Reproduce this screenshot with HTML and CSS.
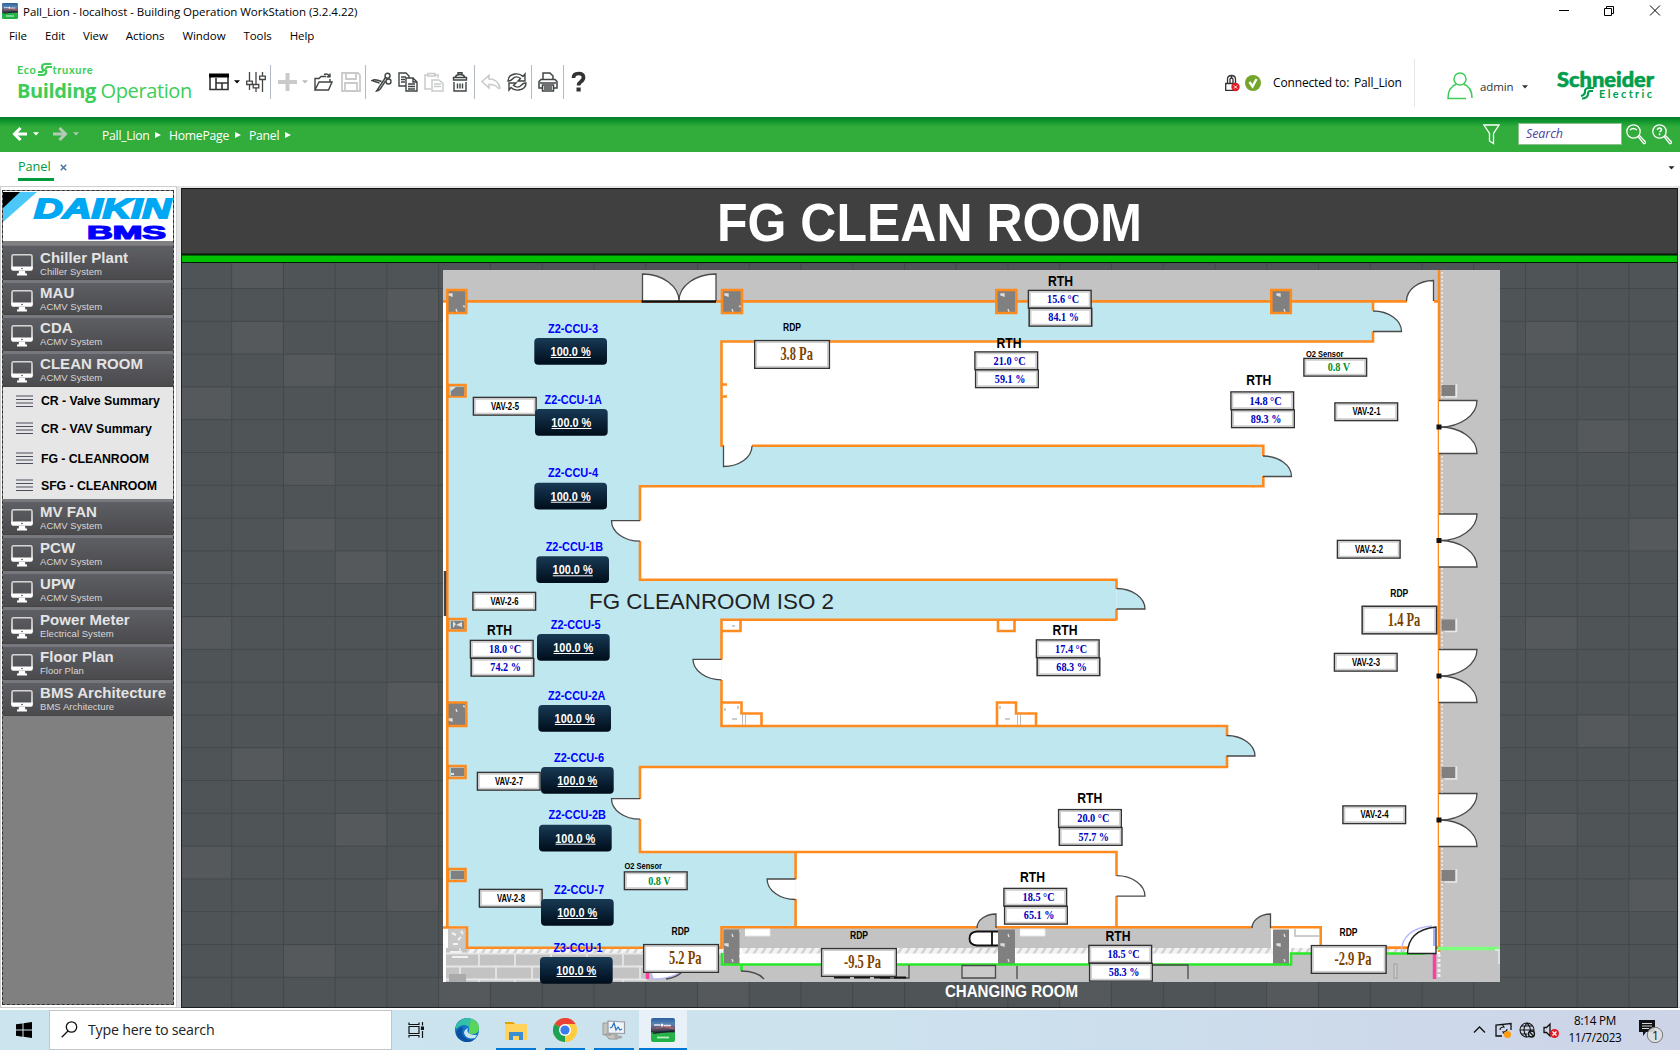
FILE: index.html
```html
<!DOCTYPE html>
<html lang="en">
<head>
<meta charset="utf-8">
<title>Pall_Lion - localhost - Building Operation WorkStation (3.2.4.22)</title>
<link rel="stylesheet" href="styles.css">
</head>
<body>
<svg class="defs" width="0" height="0" aria-hidden="true">
  <defs>
    <linearGradient id="gApp" x1="0" y1="0" x2="0" y2="1"><stop offset="0" stop-color="#2a5f9e"/><stop offset=".25" stop-color="#5b83b4"/><stop offset=".42" stop-color="#6a5a72"/><stop offset=".58" stop-color="#2b3340"/><stop offset=".62" stop-color="#28b34a"/><stop offset="1" stop-color="#1fb243"/></linearGradient>
    <linearGradient id="gScreen" x1="0" y1="0" x2="0" y2="1"><stop offset="0" stop-color="#d6d6d6"/><stop offset="1" stop-color="#fff"/></linearGradient>
    <symbol id="monitor" viewBox="0 0 24 24"><rect x="2" y="1.7" width="20" height="14.5" rx="1.5" fill="none" stroke="url(#gScreen)" stroke-width="1.5"/><path d="M1.3 13.5h21.4v2.5q0 1.7-1.7 1.7H3q-1.7 0-1.7-1.7zM9 18h6l.4 2.5H17v2H7v-2h1.600z" fill="#fff"/><circle cx="12" cy="15.500" r=".8" fill="#444"/></symbol>
    <symbol id="bars" viewBox="0 0 17 13"><path d="M0 1h17M0 4.500h17M0 8h17M0 11.500h17" stroke="#4c4c5c" stroke-width="1.200"/></symbol>
    <symbol id="caret" viewBox="0 0 6 4"><path d="M0 .3h6L3 3.500z" fill="currentColor"/></symbol>
    <symbol id="app" viewBox="0 0 24 24"><rect width="24" height="24" rx="2" fill="url(#gApp)"/><path d="M1 12 14 7l9 3v1.500L13 9z" fill="#b8605c"/><path d="M3 7h6M13 7.500h7" stroke="#dfe9f5" stroke-width="1.300"/><circle cx="11" cy="7" r="1.500" fill="#fff"/><path d="M2 14.500 23 12v1.500L2 16z" fill="#1b2430"/><path d="M6 19.500h12" stroke="#b5efc2" stroke-width="1.800"/></symbol>
  </defs>
</svg>

<header class="titlebar">
  <svg class="appicon" width="16" height="16"><use href="#app"/></svg>
  <span class="caption">Pall_Lion - localhost - Building Operation WorkStation (3.2.4.22)</span>
  <svg class="winctl" width="102" height="12" fill="none" stroke="#000"><path d="M0 5.500h10M45.500 3.500h7v7h-7zM47.500 3.500v-2h7v7h-2M91 .5l10 10M101 .5l-10 10"/></svg>
</header>
<nav class="menubar"><span>File</span><span>Edit</span><span>View</span><span>Actions</span><span>Window</span><span>Tools</span><span>Help</span></nav>

<section class="toolbar">
  <div class="brand">
    <div class="eco">Eco<svg width="16" height="15" viewBox="0 0 16 15" fill="none" stroke="#3dcd58" stroke-width="2.200"><path d="M14.500 2H8.500Q5 2 5 5t3 3q2 1 1 3-1 2-3 2H1M15 5h-4q-2 0-2 2M1 10h3q2 0 2-2"/></svg>truxure</div>
    <div class="bo"><b>Building</b> Operation</div>
  </div>
  <div class="tools">
    <svg width="20" height="20" fill="none" stroke="#333" stroke-width="1.600"><path d="M1 4h18v13.500H1zM7 6v11.500M7 11h12M13 11v6.500"/><path d="M0 3.500h20" stroke="#000" stroke-width="4"/></svg>
    <svg class="dd" width="6" height="4"><use href="#caret"/></svg>
    <svg width="20" height="20" fill="none" stroke="#444" stroke-width="1.300"><path d="M3.500 0v9M3.500 13v5M10 0v12M10 16v4M16.500 0v4M16.500 8v12M.7 9.200h5.600v3.300H.7zM7.200 12.500h5.600v3.300H7.200zM13.700 4.200h5.600v3.300h-5.600z"/></svg>
    <i class="sep"></i>
    <svg width="22" height="20" stroke="#c9cbcb" stroke-width="4"><path d="M11.500 1v18M2 10h19"/></svg>
    <svg class="dd off" width="6" height="4"><use href="#caret"/></svg>
    <svg width="20" height="20" fill="none" stroke="#3f4444" stroke-width="1.400"><path d="M2 18V6.500h4L8 4.500h5M2 18l4-8h13l-3.500 8zM17 10V7M11 2.500q4-1.500 5.500 2M17 1.500v3.300h-3.300"/></svg>
    <svg class="m8" width="20" height="20" fill="none" stroke="#c9cbcb" stroke-width="1.800"><path d="M1 1h16l2 2v16H1zM5 1v6h10V1M4 19v-8h12v8"/></svg>
    <i class="sep"></i>
    <svg width="21" height="20" fill="none" stroke="#3f4444" stroke-width="1.400"><path d="M10.500 9.500Q4 6.500 1 8.500l7.500 2.500M14.500 5.500 5.500 19q3.500-.5 5-4l4-6"/><circle cx="16.500" cy="3.700" r="2.500"/><circle cx="17.500" cy="9.500" r="2.500"/></svg>
    <svg class="m6" width="20" height="20" fill="none" stroke="#3f4444" stroke-width="1.400"><path d="M8 14H1V1h7l3 3v2"/><path d="M8 6h7l4 4v9H8zM15 6v4h4M10 12h7M10 14.500h7M10 17h7M3 5h5M3 7.500h4M3 10h4"/></svg>
    <svg class="m6" width="20" height="20" fill="none" stroke="#c9cbcb" stroke-width="1.500"><path d="M7 17H1V3h3M10 3h4v3M4 4V1.500h7V4zM8 8h7l4 3.500V19H8zM10 12h7M10 14.500h7"/></svg>
    <svg class="m6" width="20" height="20" fill="none" stroke="#3f4444" stroke-width="1.400"><path d="M4 10v9h12v-9M3.500 5.500h13v2.500h-13zM5 5.500q1-3 5-3t5 3M8 2V.7h4V2M7.500 11.500v5M10 11.500v5M12.500 11.500v5"/></svg>
    <i class="sep"></i>
    <svg width="22" height="20" fill="none" stroke="#c9cbcb" stroke-width="1.500"><path d="M2 9.500 9 3.500V7q9 0 11 9-1 1-2 0-3-4-9-3.500V16z"/></svg>
    <svg class="m5" width="20" height="20" fill="none" stroke="#3f4444" stroke-width="1.400"><path d="M1 9Q1 3 8 2q5-.7 8 2.500L18 2v7h-7l2.500-2.500Q9 3 5.500 7 4 9 1 9zM19 11q0 6-7 7-5 .7-8-2.500L2 18v-7h7l-2.500 2.500Q11 17 14.500 13 16 11 19 11z"/></svg>
    <i class="sep"></i>
    <svg width="22" height="20" fill="none" stroke="#3f4444" stroke-width="1.500"><path d="M6 8V1h7l3 3v4M5 16H2V9.500L4 7.500h14l2 2V16h-3M5.500 13h11v6h-11zM3 11h16M7 15h8M7 17h8"/></svg>
    <i class="sep"></i>
    <svg class="help" width="15" height="22" fill="none" stroke="#333"><path d="M2.500 7q0-4.500 5-4.500t5 4q0 2.300-2.700 4.200-2.200 1.500-2.200 3.800" stroke-width="3.700"/><path d="M7.600 16.500v4" stroke-width="4.200"/></svg>
  </div>
  <div class="status">
    <svg width="16" height="18" fill="none"><path d="M1.700 9.500h9.600v6.800H1.700zM3.500 9.500V5q.2-3.500 4-3.500t4 3.500v5M6 9.500V5.500q0-1.500 1.500-1.500T9 5.500V9M7.500 1.500V4" stroke="#333" stroke-width="1.300"/><circle cx="11.500" cy="13" r="4.200" fill="#e01b22"/><path d="m10 11.500 3 3m0-3-3 3" stroke="#fff"/></svg>
    <svg class="ok" width="16" height="16"><circle cx="8" cy="8" r="8" fill="#74a52b"/><path d="m4.500 7 3 4.500 4-7.500" fill="none" stroke="#fff" stroke-width="2.400"/></svg>
    <span class="conn">Connected to:</span><span class="srv">Pall_Lion</span>
  </div>
  <div class="user">
    <svg width="26" height="28" fill="none" stroke="#3dcd58" stroke-width="1.500"><circle cx="13" cy="7" r="6"/><path d="M9.500 12Q1 15 1 26.500h18M16.500 12Q25 15 25 26"/></svg>
    <span>admin</span><svg class="dd" width="6" height="4"><use href="#caret"/></svg>
  </div>
  <svg class="schneider" width="102" height="32" fill="#009e4d" font-family="Lato,sans-serif"><text x="2" y="16" font-size="21" font-weight="900" stroke="#009e4d" stroke-width=".6" textLength="97" lengthAdjust="spacingAndGlyphs">Schneider</text><text x="44" y="27" font-size="11" font-weight="700" textLength="53">Electric</text><path d="M39 17h-5q-4 0-4 3.500t-4 4.500M38 20h-3q-2 0-2 3.500-1 4-6 4" fill="none" stroke="#009e4d" stroke-width="2.200"/></svg>
</section>

<section class="navbar">
  <svg class="arrow" width="16" height="14" fill="none" stroke="#fff" stroke-width="3"><path d="M15 7H3M8.500 1 2.500 7l6 6"/></svg>
  <svg class="dd" width="6" height="4"><use href="#caret"/></svg>
  <svg class="arrow fwd" width="16" height="14" fill="none" stroke="#b4c9b6" stroke-width="3"><path d="M1 7h12M7.500 1l6 6-6 6"/></svg>
  <svg class="dd dim" width="6" height="4"><use href="#caret"/></svg>
  <div class="crumbs"><span>Pall_Lion</span><i></i><span class="hp">HomePage</span><i></i><span>Panel</span><i></i></div>
  <svg class="filter" width="17" height="21" fill="none" stroke="#fff" stroke-width="1.300"><path d="M1 1h15l-5.500 8.500v10L6.500 17V9.500z"/></svg>
  <div class="search">Search</div>
  <svg width="20" height="21" fill="none" stroke="#fff" stroke-width="1.300"><circle cx="7.500" cy="7.500" r="6.700"/><path d="M4 6q3-3 7 0M12 12.500l5.500 7q2 .5 2-1.500L13 11"/></svg>
  <svg class="qm" width="20" height="21" fill="none" stroke="#fff" stroke-width="1.300"><circle cx="7.500" cy="7.500" r="6.700"/><path d="M12 12.500l5.500 7q2 .5 2-1.500L13 11"/><path d="M5.500 6q0-2 2-2t2 1.800q0 1.200-2 2.200M7.500 9.500v1.800" stroke-width="1.600"/></svg>
</section>

<section class="tabs">
  <div class="tab">Panel</div><svg class="x" width="7" height="7" stroke="#44749f" stroke-width="1.500"><path d="m.8.8 5.400 5.400M6.200.8.8 6.200"/></svg>
  <svg class="dd" width="7" height="4"><use href="#caret"/></svg>
</section>

<main class="work">
  <aside class="side">
    <div class="side-in">
      <svg class="logo" width="170" height="50" viewBox="0 0 170 50"><path d="M0 1h34L0 31z" fill="#4cc8f8"/><path d="M0 1h17L0 17z" fill="#000"/><text x="31" y="27" font-family="Liberation Sans,Arial,sans-serif" font-weight="700" font-style="italic" font-size="28.500" fill="#00a8f3" stroke="#00a8f3" stroke-width="1.800" textLength="137" lengthAdjust="spacingAndGlyphs">DAIKIN</text><text x="84" y="47.500" font-family="Liberation Sans,Arial,sans-serif" font-weight="700" font-size="18" fill="#00f" stroke="#00f" stroke-width="1.200" textLength="79" lengthAdjust="spacingAndGlyphs">BMS</text></svg>
      <div class="gap"></div>
      <div class="item a"><svg><use href="#monitor"/></svg><p><b>Chiller Plant</b><small>Chiller System</small></p></div>
      <div class="item b"><svg><use href="#monitor"/></svg><p><b>MAU</b><small>ACMV System</small></p></div>
      <div class="item b"><svg><use href="#monitor"/></svg><p><b>CDA</b><small>ACMV System</small></p></div>
      <div class="item"><svg><use href="#monitor"/></svg><p><b>CLEAN ROOM</b><small>ACMV System</small></p></div>
      <div class="sub">
        <div class="s1"><svg><use href="#bars"/></svg>CR - Valve Summary</div>
        <div class="s2"><svg><use href="#bars"/></svg>CR - VAV Summary</div>
        <div class="s3"><svg><use href="#bars"/></svg>FG - CLEANROOM</div>
        <div class="s4"><svg><use href="#bars"/></svg>SFG - CLEANROOM</div>
      </div>
      <div class="item"><svg><use href="#monitor"/></svg><p><b>MV FAN</b><small>ACMV System</small></p></div>
      <div class="item"><svg><use href="#monitor"/></svg><p><b>PCW</b><small>ACMV System</small></p></div>
      <div class="item"><svg><use href="#monitor"/></svg><p><b>UPW</b><small>ACMV System</small></p></div>
      <div class="item"><svg><use href="#monitor"/></svg><p><b>Power Meter</b><small>Electrical System</small></p></div>
      <div class="item"><svg><use href="#monitor"/></svg><p><b>Floor Plan</b><small>Floor Plan</small></p></div>
      <div class="item"><svg><use href="#monitor"/></svg><p><b>BMS Architecture</b><small>BMS Architecture</small></p></div>
    </div>
  </aside>
  <svg class="panel" width="1497" height="820" viewBox="181 188 1497 820">
    <defs>
      <linearGradient id="btn" x1="0" y1="0" x2="0" y2="1"><stop offset="0" stop-color="#193a54"/><stop offset=".5" stop-color="#0b2338"/><stop offset="1" stop-color="#000d1a"/></linearGradient>
      <pattern id="tile" patternUnits="userSpaceOnUse" x="231.200" y="288" width="51.750" height="32.800"><rect width="51.750" height="32.800" fill="#4f5457"/><path d="M.5 0v32.800M0 .5h51.750" stroke="#434749" stroke-width="1.200"/></pattern>
      <pattern id="speck" patternUnits="userSpaceOnUse" width="23" height="25"><rect width="23" height="25" fill="#808080"/><path d="M3 6l3 1M12 19h3v2l-3-1zM19 9l1 3" stroke="#ddd" stroke-width="1.400" fill="#ddd"/></pattern>
      <pattern id="hatch" patternUnits="userSpaceOnUse" x="0" y="948" width="8" height="6"><rect width="8" height="6" fill="#f4f4f4"/><path d="M0 6 4 0h3L3 6z" fill="#d2d2d2"/></pattern>
      <pattern id="brick" patternUnits="userSpaceOnUse" x="478" y="952.500" width="36" height="26"><rect width="36" height="26" fill="#c3c3c3"/><path d="M0 1h36M0 14h36M1 0v13M18 13v13" stroke="#e6e6e6" stroke-width="1.800"/></pattern>
      <g id="doorR"><path d="M0 0A28.500 20.500 0 0 1 28.500 20.500H0"/></g>
      <g id="doorL"><path d="M0 0H-28.500A28.500 20.500 0 0 0 0 20.500"/></g>
      <g id="gate"><path d="M-1-26.500H37A37 26.500 0 0 1 0 0 37 26.500 0 0 1 37 26.500H-1"/><rect x="-3.500" y="-2.500" width="5" height="5" fill="#111" stroke="none"/></g>
      <g id="post"><path d="M15-1v13H3" fill="none" stroke="#e8e8e8" stroke-width="1.500"/><rect width="13.500" height="11" fill="#808080"/></g>
    </defs>
    <rect x="181" y="188" width="1497" height="820" fill="url(#tile)"/>
    <g id="tiles" fill="#55595b"></g>
    <rect x="181" y="188" width="1497" height="67" fill="#404040"/>
    <path d="M181 188.500h1497" stroke="#111"/>
    <rect x="181" y="253.500" width="1497" height="9.500" fill="#001a00"/>
    <rect x="181" y="255.500" width="1497" height="6.500" fill="#00c000"/>
    <path d="M181.500 188v819.500h1496V188" fill="none" stroke="#1e2022"/>
    <text class="head" x="717" y="241" textLength="425" lengthAdjust="spacingAndGlyphs">FG CLEAN ROOM</text>

    <rect x="443" y="270" width="1057" height="712" fill="#fff"/>
    <g fill="#c3c3c3">
      <path d="M443 270h1057v712h-60V301H443z"/>
      <path d="M446 948h276v34H446z" fill="url(#brick)"/>
      <path d="M722 928h549v20H722zM647 965h645v-11h148v28H647z"/>
    </g>
    <path d="M448 929h18v19h-18z" fill="#c8c8c8"/><path d="M452 933l4 2M458 940l3-3M453 944h5M461 931l2 3M450 952h12M452 957h16" stroke="#f2f2f2" stroke-width="2"/>
    <path d="M449 974h17v8h-17z" fill="#aaa"/>
    <path d="M467 948h255v5H467zM742 948h256v5.500H742zM1016 948h257v5.500h-257zM1291 948h142v5h-142z" fill="url(#hatch)"/>
    <path d="M448 302H1373V341.500H721.500V445.700H1263.300V486H640V579.700H1116.500V619.800H721.500V726H1227V767H640V852H795.600V927.500H721.500V947.700H467V927.500H448z" fill="#bfe7f0"/>
    <g fill="none" stroke="#ff8b1f" stroke-width="2.600">
      <path d="M443 301.400H1407M1434 301.400h5M447.300 301v627M1439 270v682M1373 301v9.500M1373 331.500v10H721.500V445.700h2M752 445.700H1263.300v10.300M1263.300 476v10.300H640v34.500M640 541v38.700H1116.500v9M1116.500 609v11.200M1116.500 619.800H721.500v40M721.500 680v46H1227v10M1227 756v11H640v32M640 819v33H1116.500v24M1116.500 896v31M795.600 852v27.300M795.600 899v28.500M443 927.500H467v20.200H721.500V927.300H977M996 927.300h256M1270 927.300h50.700v20.300H1438"/>
      <path d="M722 631H740.500V620M998 620v11h16.500v-11M722 702.500h19.500v11h20V726M997 726v-23.500h19v11h20V726M722 384.500h5M722 396.500h5"/>
    </g>
    <g fill="url(#speck)" stroke="#ff8b1f" stroke-width="2.600">
      <path d="M447.300 290h19v23h-19zM722 290h20v23h-20zM996.300 290h20v23h-20zM1271.300 290h19.500v23h-19.500zM447.300 702.500h19V726h-19z"/>
      <path d="M448 385h17.500v11.500H448zM448 619h17.500v11.500H448zM448 766h17.500v12H448zM448 869h17.500v12H448z" fill="#a8cdd5"/>
    </g>
    <path d="M451 387h13v9h-13zM451 621h13v8h-13zM451 768h13v8h-13zM451 871h13v8h-13z" fill="#808080"/>
    <path d="M450 387h6l-5 4zM462 622l-6 3 6 2M453 621l3 3-3 4M451 773h3v2h-3z" fill="#e2e2e2"/>
    <path d="M723.500 929.500h16V964h-16zM998 929.500h17V964h-17zM1273 929.500h16V964h-16z" fill="url(#speck)"/>
    <path d="M745 929h25v7h-25M1020 929h25v7h-25" fill="#fff" stroke="#e6e6e6"/>
    <path d="M1295 929v7h24" fill="none" stroke="#ccc" stroke-width="2"/>
    <path d="M742.500 714v11M745.500 714v11M1017.500 714v11M1020.500 714v11" stroke="#bbb"/>
    <path d="M732 719h5M1005 719h5M732 626h3M725 708v3M738 706v3M1000 706v3" stroke="#ccc" stroke-width="2"/>
    <path d="M722 953v11.500H1291V953.500H1425M741.500 964v7" fill="none" stroke="#28e828" stroke-width="2.600"/>
    <path d="M1438 948.500h62" stroke="#7dff7d" stroke-width="3.500"/>
    <path d="M1434.500 954v25M647.500 970v9" stroke="#ff3fa0" stroke-width="3.500"/>
    <path d="M1439 954v25" stroke="#eee" stroke-width="3" stroke-dasharray="3 2"/>
    <path d="M1442 272V948" stroke="#f4f4f4" stroke-width="1.400" stroke-dasharray="2 2"/>
    <path d="M445 571v45" stroke="#444" stroke-width="2.500"/>
    <use href="#post" x="1441.500" y="385"/><use href="#post" x="1441.500" y="619.500"/><use href="#post" x="1441.500" y="767"/><use href="#post" x="1441.500" y="870"/>
    <g stroke="#4a4a4a" stroke-width="1.300" fill="#fff">
      <g fill="#bfe7f0"><use href="#doorR" x="1373" y="311"/><use href="#doorR" x="1263" y="456"/><use href="#doorR" x="1116.500" y="588.500"/><use href="#doorR" x="1226.500" y="735.500"/></g>
      <use href="#doorR" x="1116.500" y="875.700"/>
      <use href="#doorL" x="640" y="520.700"/><use href="#doorL" x="721.500" y="659.300"/><use href="#doorL" x="640" y="798.700"/><use href="#doorL" x="795.600" y="879"/>
      <path d="M723.500 445.500v21A28.500 20.500 0 0 0 752 446"/>
      <path d="M642.500 301V274A36.700 27 0 0 1 679 301 36.700 27 0 0 1 716 274v27"/>
      <path d="M641.500 301.500h74.500" stroke="#111" stroke-width="2.600"/>
      <path d="M1406.500 301A27 20.500 0 0 1 1433.500 280.500V301"/>
      <use href="#gate" x="1440" y="427"/><use href="#gate" x="1440" y="540.500"/><use href="#gate" x="1440" y="676"/><use href="#gate" x="1440" y="820"/>
      <path d="M977 928A19 14 0 0 1 996 914v14M1252 928A19 14 0 0 1 1270.500 914v14" fill="#c3c3c3"/>
      <path d="M1401 953Q1402 928 1432 926" fill="none" stroke="#b9b9ff"/><path d="M1407.500 953.500Q1408 930 1436 927v26.500z" stroke="#222"/><path d="M1434 928v18" stroke="#aab0ff" stroke-width="2"/>
      <path d="M998 931.500H977Q969.500 932 969.500 938.500T977 945.500H998M992 931v15" stroke="#111" stroke-width="1.800"/>
      <path d="M962 965.500h33.500V978H962z" fill="#c9c9c9"/><path d="M1017 966v13M1151 965h37v14M909 965v13H880" fill="none"/><path d="M834 977.500h72" stroke="#111" stroke-width="2" stroke-dasharray="16 4"/>
      <path d="M741 971q16 0 23 8" fill="none"/><path d="M651 972h30q-12 7-28 7z" stroke="#b9b9ff"/><path d="M666 979q10-1 16-7" fill="none"/>
      <path d="M1394 964v14h3v-14z" stroke="#aaa" fill="#ccc"/><path d="M1495 950h4v14" fill="none" stroke="#eee"/>
    </g>
    <text class="iso" x="589" y="609" textLength="245" lengthAdjust="spacingAndGlyphs">FG CLEANROOM ISO 2</text>
    <text class="chg" x="945" y="996.500" textLength="133" lengthAdjust="spacingAndGlyphs">CHANGING ROOM</text>
    <g id="marks"></g>
  </svg>
</main>

<footer class="taskbar">
  <svg class="win" width="16" height="16"><path d="M0 2.300 6.500 1.400v6.200H0zM7.500 1.200 16 0v7.600H7.500zM0 8.500h6.500v6.200L0 13.800zM7.500 8.500H16V16l-8.500-1.200z"/></svg>
  <div class="find"><svg width="17" height="17" fill="none" stroke="#111" stroke-width="1.300"><circle cx="10.500" cy="6" r="5.200"/><path d="M7 10 .7 16.300"/></svg>Type here to search</div>
  <svg class="tv" width="16" height="16" fill="none" stroke="#111" stroke-width="1.200"><path d="M1 4.500h10v7H1zM1 .5v2h10v-2M1 15.500v-2h10v2M14.500 0v3.500M14.500 9v7"/><path d="M13.500 5h2v2.500h-2z" fill="#111"/></svg>
  <div class="tb"><svg width="24" height="24"><circle cx="12" cy="12" r="12" fill="#1176c8"/><path d="M1 8Q5 0 13 0q11 1 11 10 0 6-7 6-4 0-3-3 1-6-5-6-4 0-8 4z" fill="#35c1a5"/><path d="M16 1q8 3 8 10-1 5-7 5-4 0-3-3z" fill="#5bd45a"/><path d="M8 9q-3 8 4 12 5 2 9-1-5 5-11 4Q1 21 1 14q2-4 7-5z" fill="#0c4f9e"/><path d="M13 10q-3 7 9 7l-2 3q-9 2-11-5 0-3 4-5z" fill="#cce4ee"/></svg></div>
  <div class="tb run"><svg width="24" height="24"><path d="M1 4h8l2 2h12v16H1z" fill="#ffd35c"/><path d="M1 4h8l2 2H1z" fill="#e2a200"/><path d="M5 22v-8h14v8h-4v-4h-6v4z" fill="#3a8dd0"/></svg></div>
  <div class="tb run"><svg width="24" height="24"><circle cx="12" cy="12" r="12" fill="#ffcd40"/><path d="M12 12 1.600 6A12 12 0 0 1 22.400 6z" fill="#ea4335"/><path d="M12 12 1.600 6A12 12 0 0 0 12 24l5-9z" fill="#1fa153"/><path d="M12 12V6h10.400A12 12 0 0 1 12 24z" fill="#ffcd40"/><path d="M12 6h10.400A12 12 0 0 0 12 0z" fill="#ea4335"/><circle cx="12" cy="12" r="6" fill="#fff"/><circle cx="12" cy="12" r="4.600" fill="#3b7ded"/></svg></div>
  <div class="tb run"><svg width="24" height="24"><path d="M1 5h8v12H1zM3 16h12v5H7z" fill="#c5c5c0" stroke="#999"/><path d="m6 3 16.500 1v11.500L6 15z" fill="#eef4fa" stroke="#999" stroke-width="1.200"/><path d="m8 10 2-1 2-4 2 7 2-3 2 3 2-1" fill="none" stroke="#2a6fc0" stroke-width="1.200"/><path d="m12 17 8 1v2l-7 2z" fill="#aaa"/></svg></div>
  <div class="tb run on"><svg width="24" height="24"><use href="#app"/></svg></div>
  <svg class="tray" width="88" height="18" fill="none" stroke="#111" stroke-width="1.300"><path d="m1 11.500 5.500-5.500 5.500 5.500"/><path d="M29 15h-6V4l15-1.500V9"/><path d="M27 9q0-3 4-3l-1.500-2M34 8q0 3-4 3l1.500 2" stroke-width="1.100"/><circle cx="34.500" cy="13.500" r="3.500" fill="#ff9a0a" stroke="none"/><g stroke-width="1.100"><circle cx="54" cy="9" r="7"/><path d="M54 2q-6 7 0 14M54 2q5 5 2.500 9M47 9h14M48.500 5h11M48.500 13h6"/></g><circle cx="58.500" cy="13" r="3" fill="#ccd7e7"/><path d="m56.500 11 4 4M71 6.500h2.500L77 3v12l-3.500-3.500H71z"/><circle cx="81.500" cy="12.500" r="4.500" fill="#e01b22" stroke="none"/><path d="m79.500 10.500 4 4m0-4-4 4" stroke="#fff"/></svg>
  <div class="clock"><span>8:14 PM</span><span>11/7/2023</span></div>
  <svg class="note" width="26" height="26"><path d="M0 3h16v12h-9l-3 4v-4H0z" fill="#111"/><path d="M3 6.500h10M3 9h10M3 11.500h7" stroke="#ccd7e7"/><circle cx="16" cy="18" r="7.700" fill="#dfe0e2" fill-opacity=".9" stroke="#777"/><text x="13" y="22.500" font-family="Open Sans,sans-serif" font-size="12" fill="#111">1</text></svg>
</footer>
<script src="app.js"></script>
</body>
</html>
```
FILE: styles.css
```css
* { box-sizing: border-box; }
body { margin: 0; width: 1680px; height: 1050px; overflow: hidden; display: flex; flex-direction: column; background: #fff; color: #000; font: 11.5px "Open Sans", "Noto Sans", sans-serif; }
svg { display: block; flex: none; }
.defs { position: absolute; }
.titlebar { height: 24px; flex: none; display: flex; align-items: center; padding: 0 19px 2px 2px; }
.caption { margin-left: 5px; letter-spacing: -.03px; white-space: nowrap; }
.winctl { margin-left: auto; }
.menubar { height: 24px; flex: none; display: flex; align-items: center; gap: 18px; padding: 0 0 2px 9px; font-size: 11.500px; letter-spacing: -.08px; }
.toolbar { height: 69px; flex: none; display: flex; align-items: flex-start; }
.brand { width: 209px; padding: 12px 0 0 17px; color: #3dcd58; white-space: nowrap; }
.eco { display: flex; align-items: center; height: 18px; font: 700 11px Lato, sans-serif; letter-spacing: .65px; }
.bo { font: 400 20px/26px "Open Sans", sans-serif; letter-spacing: -.4px; }
.bo b { font-weight: 700; }
.tools { display: flex; align-items: center; height: 34px; margin-top: 17px; }
.tools .dd { margin: 0 6px 0 5px; width: 6px; }
.tools .dd.off { margin: 0 5px 0 4px; color: #bbb; }
.sep { width: 1px; height: 34px; background: #b4bac4; margin: 0 5px 0 4px; }
.m5 { margin-left: 5px; } .m6 { margin-left: 6px; } .m8 { margin-left: 8px; }
.help { margin-left: 2px; }
.status { margin-left: auto; display: flex; align-items: center; height: 48px; margin-top: 11px; padding-right: 12px; border-right: 1px solid #e4e6e6; font-size: 12px; white-space: nowrap; }
.status span { margin-top: -2px; }
.ok { margin-left: 5px; }
.conn { margin-left: 12px; width: 81px; letter-spacing: -.15px; }
.srv { letter-spacing: -.15px; width: 48px; }
.user { display: flex; align-items: center; margin: 24px 0 0 32px; width: 110px; }
.user span { margin: 0 0 0 7px; width: 40px; letter-spacing: -.1px; font-size: 11.500px; color: #333; }
.user .dd { margin-top: 2px; color: #333; margin-left: 2px; }
.schneider { margin: 23px 23px 0 -2px; overflow: visible; }
.navbar { height: 35px; flex: none; display: flex; align-items: center; padding: 0 8px 0 12px; background: linear-gradient(#007f29, #15992f 5px, #32ad3c 10px); color: #fff; }
.navbar > svg { margin-bottom: 1px; }
.arrow + .dd { margin-left: 5px; }
.fwd { margin-left: 13px; }
.dim { color: #b4c9b6; }
.crumbs { display: flex; align-items: center; margin: 1px auto 0 23px; font-size: 12.200px; letter-spacing: -.25px; }
.crumbs span { width: 46px; }
.crumbs .hp { width: 59px; }
.crumbs span:nth-of-type(3) { width: 29px; }
.crumbs i { border: 3.500px solid transparent; border-left: 6px solid #fff; border-right: 0; margin: 0 8px 0 7px; }
.search { width: 104px; height: 22px; margin: 0 4px 2px 18px; padding-left: 7px; background: #fff; border: 1px solid #8bbf8f; font: italic 12.500px/20px "Open Sans", sans-serif; letter-spacing: -.1px; color: #4b42a6; }
.navbar .qm { margin-left: 6px; }
.tabs { height: 36px; flex: none; display: flex; align-items: flex-start; padding: 0 5px 0 18px; }
.tab { height: 29px; width: 36px; border-bottom: 3px solid #009a3d; color: #009a3d; font-size: 12.700px; line-height: 29px; letter-spacing: -.05px; }
.tabs .x { margin: 12px 0 0 6px; }
.tabs .dd { margin: 14px 0 0 auto; color: #222; }
.work { flex: none; height: 822px; margin-top: -2px; display: flex; background: #e4e4e6; border-bottom: 1px solid #c8ccd0; }
.side { width: 177px; border: 1px solid #cfcfcf; border-width: 1px 1px 0 1px; background: #fff; padding: 3px 2px 2px 1px; }
.side-in { height: 100%; background: #808080; border: 1px dashed #333; overflow: hidden; }
.logo { background: #fff; }
.gap { height: 4px; background: #808080; }
.item { height: 36.200px; display: flex; border-top: 3px solid #77787d; background: linear-gradient(#5e5f64, #4b4b4e); color: #e4e4e4; border-bottom: 1px solid #454547; }
.item.b { height: 35.600px; }
.item.a { height: 34.500px; border-top-width: 1px; }
.item svg { width: 24px; height: 24px; margin: 6px 6px 0 7px; }
.item p { margin: 1px 0 0; font: 9.500px/11px "Liberation Sans", Arial, sans-serif; color: #d8d8d8; }
.item.a p { margin-top: 3px; }
.item.a svg { margin-top: 7px; }
.item b { display: block; font-size: 15px; line-height: 18px; letter-spacing: .05px; white-space: nowrap; color: #e4e4e4; }
.item small { display: block; font-size: 9.500px; line-height: 10px; letter-spacing: .05px; }
.sub { height: 112px; background: #e6e6e6; padding: 0 0 0 13px; font: 700 12.300px "Liberation Sans", Arial, sans-serif; color: #000; white-space: nowrap; }
.sub div { display: flex; align-items: center; letter-spacing: -.05px; }
.sub svg { width: 17px; height: 13px; margin-right: 8px; }
.sub .s1 { height: 29px; } .sub .s2 { height: 26px; }
.sub .s3 { height: 28px; margin-top: 3px; } .sub .s4 { height: 26px; }
.panel { margin: 2px 0 0 4px; }
.panel text { font-family: "Liberation Sans", Arial, sans-serif; font-weight: 700; }
.panel .head { font-size: 54px; fill: #fff; }
.panel .iso { font-size: 22.500px; font-weight: 400; fill: #222; }
.panel .chg { font-size: 16.500px; fill: #fff; }
.panel .ccu { font-size: 13px; fill: #00f; }
.panel .pct { font-size: 12.800px; fill: #fff; }
.panel .vav { font-size: 10.200px; }
.panel .rth { font-size: 14.500px; }
.panel .rdp { font-size: 10px; }
.panel .o2 { font-size: 9px; }
.panel .val { font-family: "Liberation Serif", "Times New Roman", serif; font-size: 12.200px; fill: #0000c0; }
.panel .grn { fill: #009030; }
.panel .pa { font-size: 18px; fill: #7d4300; }
.box { fill: #fff; stroke: #333; stroke-width: 1.600; }
.boxin { fill: none; stroke: #cfcfcf; stroke-width: 1.600; }
.taskbar { height: 40px; flex: none; margin-top: 2px; display: flex; align-items: center; background: linear-gradient(90deg, #cbe4ee, #cce3ee 50%, #cdd4e8); }
.win { margin: 0 17px 0 16px; }
.find { width: 343px; height: 40px; border: 1px solid #c0c6ca; background: #fff; display: flex; align-items: center; padding: 0 0 1px 11px; font-size: 14.200px; letter-spacing: -.22px; color: #222; }
.find svg { margin-right: 10px; }
.tv { margin: 0 23px 0 16px; }
.tb { width: 40px; height: 40px; margin-right: 9px; display: grid; place-items: center; }
.run { border-bottom: 2px solid #0078d4; padding-top: 2px; }
.tb.on { width: 48px; margin-left: -4px; background: #e9f1f8; }
.tray { margin-left: auto; }
.clock { width: 70px; display: flex; flex-direction: column; align-items: center; font-size: 11.700px; line-height: 17px; letter-spacing: -.25px; margin: -2px 0 0 -1px; }
.note { margin: 0 15px 0 9px; }
```
FILE: app.js
```js
// Live points and labels of the FG clean room panel, in panel coordinates.
const out = [];
const text = (cls, x, y, w, s) =>
  out.push(`<text class="${cls}" x="${x}" y="${y}" textLength="${w}" lengthAdjust="spacingAndGlyphs">${s}</text>`);
const box = (x, y, w = 62.5, h = 17.5) =>
  out.push(`<rect class="box" x="${x}" y="${y}" width="${w}" height="${h}"/><rect class="boxin" x="${x + 1.5}" y="${y + 1.5}" width="${w - 3}" height="${h - 3}"/>`);

[["VAV-2-5", 473.5, 397.5], ["VAV-2-6", 473, 592.5], ["VAV-2-7", 477.5, 772.5], ["VAV-2-8", 479.5, 889.5],
 ["VAV-2-1", 1335, 403], ["VAV-2-2", 1337.5, 540.5], ["VAV-2-3", 1334.5, 653.5], ["VAV-2-4", 1343, 806]]
  .forEach(([s, x, y]) => { box(x, y); text("vav", x + 17.5, y + 12, 28, s); });

[["Z2-CCU-3", 534.3, 338, 548, 50, 332.7], ["Z2-CCU-1A", 535, 409, 544.5, 57.5, 404], ["Z2-CCU-4", 534.3, 482.7, 548, 50, 477.3],
 ["Z2-CCU-1B", 536.3, 556.3, 545.7, 57.5, 551.3], ["Z2-CCU-5", 537, 634, 550.7, 50, 628.7], ["Z2-CCU-2A", 538.3, 705, 548, 57.5, 700],
 ["Z2-CCU-6", 541, 767, 554, 50, 761.7], ["Z2-CCU-2B", 539, 824.7, 548.5, 57.5, 819.3], ["Z2-CCU-7", 541, 899, 554, 50, 893.7],
 ["Z3-CCU-1", 540, 957, 553.5, 49, 952]]
  .forEach(([s, x, y, lx, lw, ly]) => {
    text("ccu", lx, ly, lw, s);
    out.push(`<rect x="${x}" y="${y}" width="72.700" height="26.700" rx="4" fill="url(#btn)"/><path d="M${x + 16.5} ${y + 19.5}h40" stroke="#fff"/>`);
    text("pct", x + 16.3, y + 17.8, 40, "100.0 %");
  });

[[1028.5, 290.5, 1048, 285.7, "15.6", "84.1"], [975, 352, 996.5, 348.3, "21.0", "59.1"], [1231, 392, 1246.3, 385.2, "14.8", "89.3"],
 [470.5, 640.5, 487, 634.7, "18.0", "74.2"], [1036.5, 640, 1052.5, 634.5, "17.4", "68.3"], [1058.7, 809.7, 1077.3, 803, "20.0", "57.7"],
 [1004, 888.5, 1020, 882, "18.5", "65.1"], [1089, 945.5, 1105.5, 941.2, "18.5", "58.3"]]
  .forEach(([x, y, lx, ly, t, h]) => {
    text("rth", lx, ly, 25, "RTH");
    box(x, y); box(x + .7, y + 18);
    text("val", x + 18.6, y + 12.6, 32, t + " °C"); text("val", x + 19.8, y + 30.8, 30.5, h + " %");
  });

[[1304, 358.5, 1306, 356.5], [624.5, 872, 624.5, 869]]
  .forEach(([x, y, lx, ly]) => { text("o2", lx, ly, 37.5, "O2 Sensor"); box(x, y); text("val grn", x + 23.7, y + 12.6, 22.5, "0.8 V"); });

[[754.8, 340.7, 783, 331, "3.8", 25.6], [1362.2, 606.3, 1390.3, 597, "1.4", 25.6], [643.8, 944.7, 671.5, 935, "5.2", 25.2],
 [821.7, 948.7, 850, 938.7, "-9.5", 22.3], [1311.5, 945.7, 1339.5, 936, "-2.9", 23]]
  .forEach(([x, y, lx, ly, v, dx]) => {
    text("rdp", lx, ly, 18, "RDP");
    box(x, y, 74.5, 27.5);
    text("val pa", x + dx, y + 19.7, v[0] === "-" ? 37 : 32.5, v + " Pa");
  });
document.getElementById("marks").innerHTML = out.join("");

// Lighter floor tiles: [column, row], counted from the tile at 231.2, 288.
document.getElementById("tiles").innerHTML = [[0, -1], [0, 1], [1, 2], [-1, 3], [1, 5], [3, 0], [2, 8], [1, 7], [-1, 10], [3, 12], [0, 14], [2, 16], [3, 18], [-1, 17], [1, 20], [25, 1], [26, 4], [27, 7], [25, 10], [26, 13], [25, 16], [27, 18], [4, 21], [9, 21], [16, 21], [20, 21]]
  .map(([c, r]) => `<rect x="${232.2 + c * 51.75}" y="${289.2 + r * 32.8}" width="50.500" height="31.500"/>`).join("");
```
